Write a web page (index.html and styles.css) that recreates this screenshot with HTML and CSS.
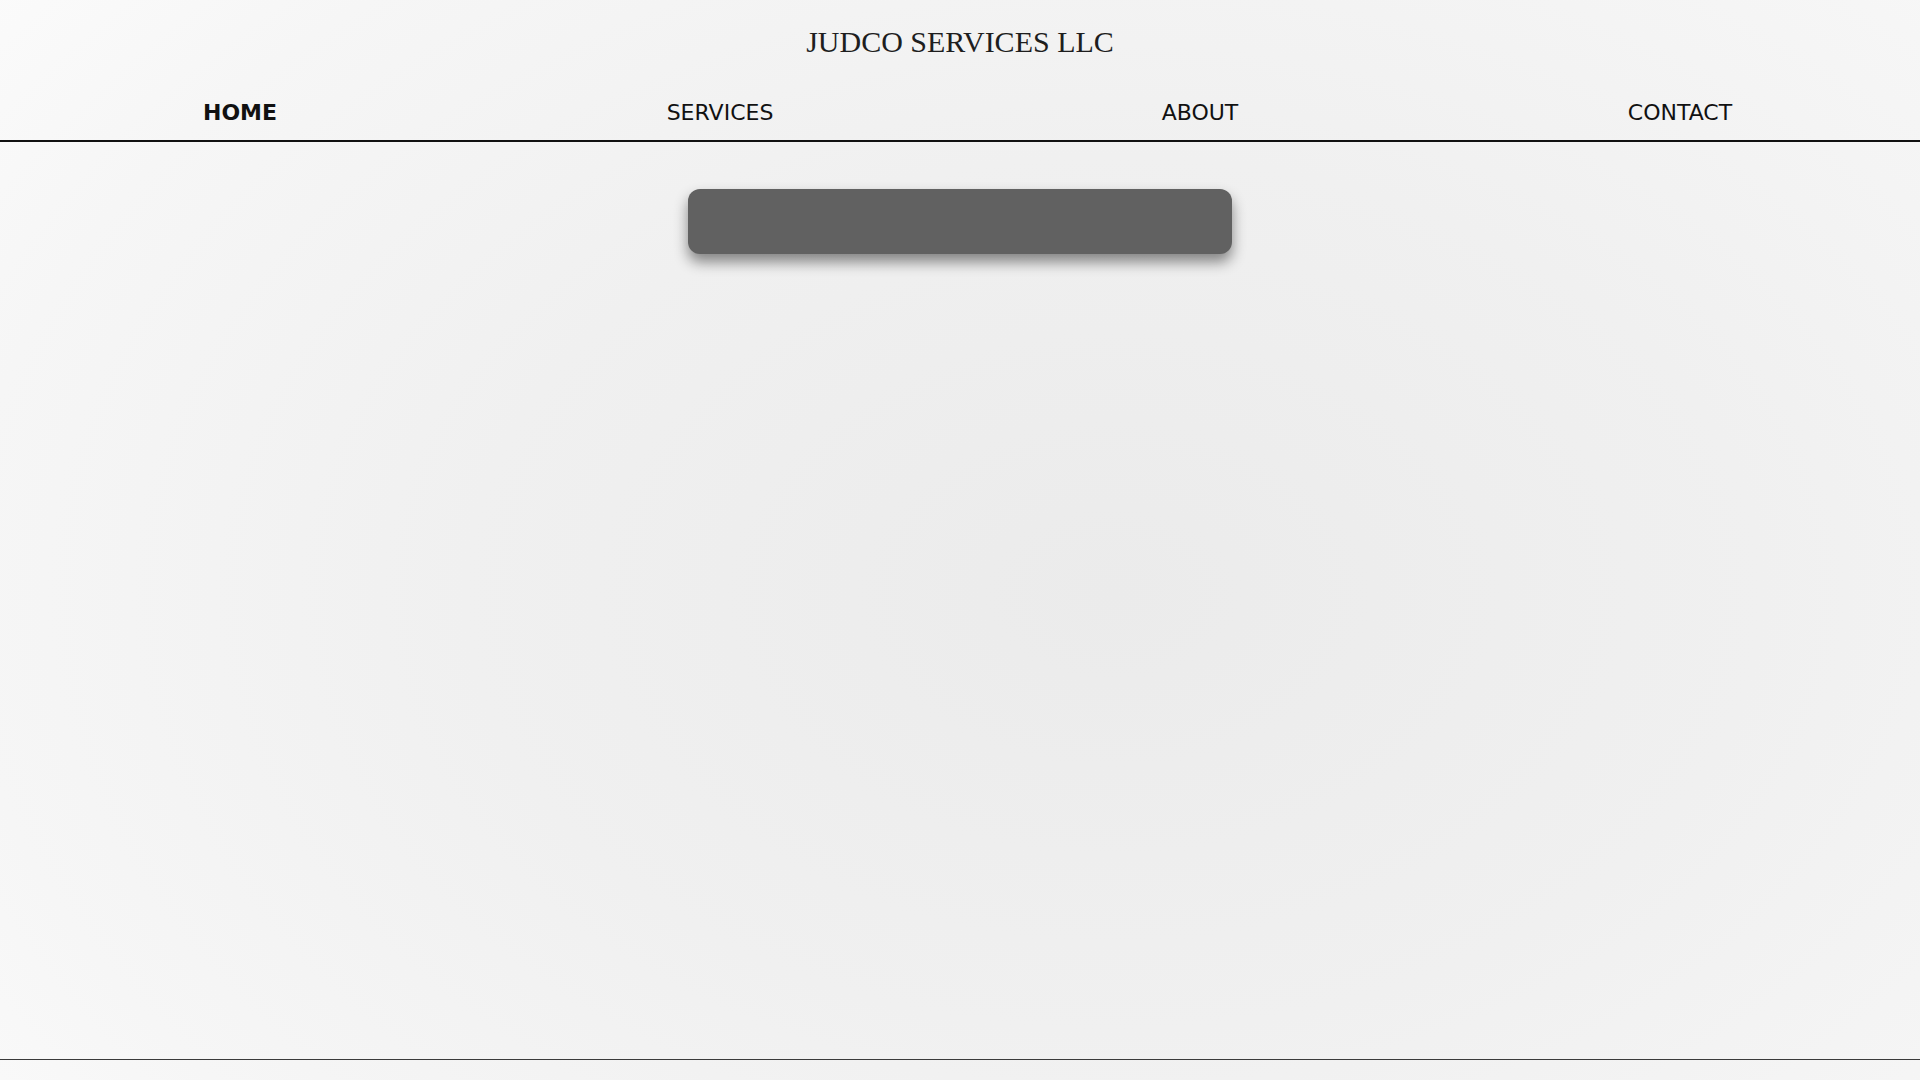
FILE: index.html
```html
<!DOCTYPE html>
<html lang="en">
<head>
<meta charset="utf-8">
<title>JUDCO SERVICES LLC</title>
<link rel="stylesheet" href="styles.css">
</head>
<body>
<header class="site-header">
  <h1 class="brand">JUDCO SERVICES LLC</h1>
  <nav class="nav">
    <a class="nav-link active" href="#">HOME</a>
    <a class="nav-link" href="#">SERVICES</a>
    <a class="nav-link" href="#">ABOUT</a>
    <a class="nav-link" href="#">CONTACT</a>
  </nav>
</header>
<main class="main">
  <div class="banner"></div>
</main>
<footer class="footer"></footer>
</body>
</html>
```
FILE: styles.css
```css
html, body {
  margin: 0;
  padding: 0;
  height: 100%;
}
body {
  min-height: 100vh;
  display: flex;
  flex-direction: column;
  background: radial-gradient(ellipse 75% 90% at 58% 55%, #ebebeb 0%, #f0f0f0 45%, #f6f6f6 80%, #fbfbfb 100%);
  background-color: #f0f0f0;
  font-family: "DejaVu Sans", sans-serif;
  color: #111;
}
.site-header {
  display: flex;
  flex-direction: column;
}
.brand {
  margin: 0;
  padding-top: 25px;
  text-align: center;
  font-family: "Liberation Serif", "Times New Roman", serif;
  font-weight: normal;
  font-size: 30px;
  color: #1e1e1e;
}
.nav {
  display: grid;
  grid-template-columns: repeat(4, 1fr);
  padding: 41px 0 15px;
  border-bottom: 2px solid #111;
}
.nav-link {
  text-align: center;
  font-size: 22px;
  color: #111;
  text-decoration: none;
}
.nav-link.active {
  font-weight: bold;
}
.main {
  flex: 1;
  display: flex;
  flex-direction: column;
  align-items: center;
  padding-top: 47px;
}
.banner {
  width: 544px;
  height: 65px;
  background: #616161;
  border-radius: 12px;
  box-shadow: 0 8px 14px rgba(0, 0, 0, 0.45);
}
.footer {
  height: 20px;
  border-top: 1px solid #3a3a3a;
}
```
